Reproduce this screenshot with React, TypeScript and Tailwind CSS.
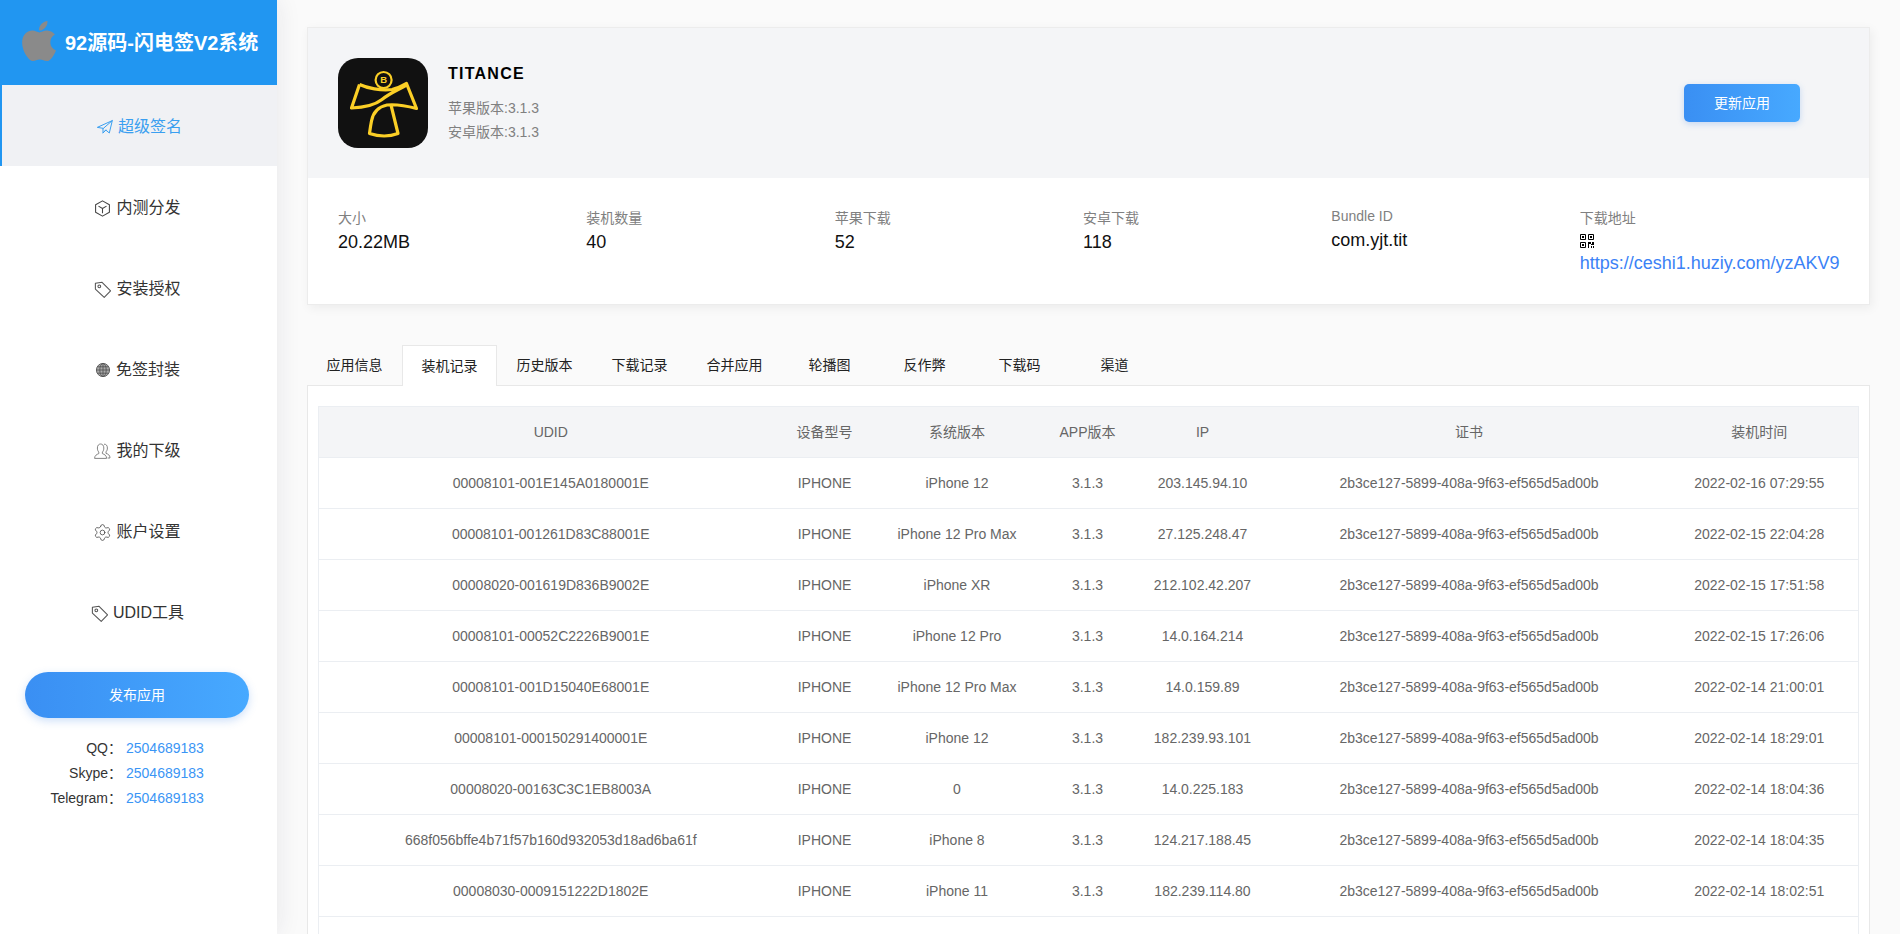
import { FaApple } from "react-icons/fa";
import { Settings } from "lucide-react";

const plane = (
  <svg width="16" height="16" viewBox="0 0 16 16" fill="none" stroke="currentColor" strokeWidth="1" strokeLinejoin="round" strokeLinecap="round">
    <path d="M.7 8.2 15.3 1.6 12.3 14 8.8 11 6 14V9.7Z" />
    <path d="M6 9.7 15.3 1.6M6 14l2.8-3" />
  </svg>
);
const cube = (
  <svg width="17" height="17" viewBox="0 0 16 16" fill="none" stroke="#444" strokeWidth="1" strokeLinejoin="round">
    <path d="M8 .8 14.5 4.4V11.6L8 15.2 1.5 11.6V4.4Z" />
    <path d="M4.2 5.8 8 8l3.8-2.2M8 8v4.5" />
  </svg>
);
const tag = (
  <svg width="17" height="17" viewBox="0 0 16 16" fill="none" stroke="#555" strokeWidth="1" strokeLinejoin="round">
    <path d="M1.3 2.2 7.6 1.2 15.6 9.4 9.6 15.4 1.3 7.6Z" />
    <circle cx="5" cy="5" r="1.3" />
  </svg>
);
const globe = (
  <svg width="16" height="16" viewBox="0 0 16 16" fill="none" stroke="#555" strokeWidth=".9">
    <circle cx="8" cy="8" r="6.6" fill="#aaa" />
    <ellipse cx="8" cy="8" rx="3.2" ry="6.6" />
    <path d="M8 1.4V14.6M1.4 8H14.6M2.4 4.8H13.6M2.4 11.2H13.6" />
  </svg>
);
const user = (
  <svg width="17" height="16" viewBox="0 0 17 16" fill="none" stroke="#777" strokeWidth=".9" strokeLinejoin="round">
    <path d="M.6 15.4C.6 12.4 2.8 11.4 4.8 10.6V9C3.7 8 3.4 6.6 3.4 5 3.4 2.4 4.8 1 6.6 1S9.8 2.4 9.8 5C9.8 6.6 9.5 8 8.4 9V10.6C10.4 11.4 12.6 12.4 12.6 15.4Z" />
    <path d="M10 1.2C12 1 13.4 2.4 13.4 5 13.4 6.6 13 7.8 12 8.8V10.4C14 11 16 12 16 15H13.6" />
  </svg>
);

const nav: [any, string][] = [
  [cube, "内测分发"],
  [tag, "安装授权"],
  [globe, "免签封装"],
  [user, "我的下级"],
  [<Settings size={19} strokeWidth={1} color="#444" className="-mx-[1px]" />, "账户设置"],
  [tag, "UDID工具"],
];

const contacts = ["QQ：", "Skype：", "Telegram："];

const cert = "2b3ce127-5899-408a-9f63-ef565d5ad00b";
const rows = [
  ["00008101-001E145A0180001E", "iPhone 12", "203.145.94.10", "2022-02-16 07:29:55"],
  ["00008101-001261D83C88001E", "iPhone 12 Pro Max", "27.125.248.47", "2022-02-15 22:04:28"],
  ["00008020-001619D836B9002E", "iPhone XR", "212.102.42.207", "2022-02-15 17:51:58"],
  ["00008101-00052C2226B9001E", "iPhone 12 Pro", "14.0.164.214", "2022-02-15 17:26:06"],
  ["00008101-001D15040E68001E", "iPhone 12 Pro Max", "14.0.159.89", "2022-02-14 21:00:01"],
  ["00008101-000150291400001E", "iPhone 12", "182.239.93.101", "2022-02-14 18:29:01"],
  ["00008020-00163C3C1EB8003A", "0", "14.0.225.183", "2022-02-14 18:04:36"],
  ["668f056bffe4b71f57b160d932053d18ad6ba61f", "iPhone 8", "124.217.188.45", "2022-02-14 18:04:35"],
  ["00008030-0009151222D1802E", "iPhone 11", "182.239.114.80", "2022-02-14 18:02:51"],
];

const tabs = ["应用信息", "装机记录", "历史版本", "下载记录", "合并应用", "轮播图", "反作弊", "下载码", "渠道"];

const stats = [
  ["大小", "20.22MB"],
  ["装机数量", "40"],
  ["苹果下载", "52"],
  ["安卓下载", "118"],
];

function AppIcon() {
  return (
    <svg width="90" height="90" viewBox="3 3 90 90" className="shrink-0">
      <rect x="3" y="3" width="90" height="90" rx="20" fill="#111" />
      <g fill="none" stroke="#fbcf26" strokeWidth="3.2" strokeLinejoin="round">
        <path d="M24.5 29.5C32 33 46 36 57 34.5 62 33.6 67 31 71.5 28.5L81.5 53.5C72 51 62 49 52 50 42 52 38 58 36.5 66 35.5 71 35 75 34.5 78.5 45 82 55 81.5 63 78.5L56 50" />
        <path d="M24.5 29.5 16.5 53C30 52.5 40 50 47 44.5 55 38 63 35 71.5 30" />
        <circle cx="48.6" cy="25" r="8" strokeWidth="2.2" />
      </g>
      <text x="48.6" y="28.4" textAnchor="middle" fontSize="9.5" fontWeight="700" fill="#fbcf26" fontFamily="Liberation Sans">B</text>
    </svg>
  );
}

function QrIcon() {
  return (
    <svg width="14" height="14" viewBox="0 0 14 14" className="block">
      <path fill="none" stroke="#000" d="M.5.5h5v5h-5zM8.5.5h5v5h-5zM.5 8.5h5v5h-5z" />
      <path d="M2 2h2v2H2zM10 2h2v2h-2zM2 10h2v2H2zM8 8h3v2H9v4H8zM12 8h2v3h-3v-1h1zM11 12h1v2h-1zM13 12h1v2h-1z" />
    </svg>
  );
}

export default function App() {
  return (
    <div className="flex h-[934px] overflow-hidden bg-[#fafafa] text-[14px] font-['Liberation_Sans','Noto_Sans_CJK_SC',sans-serif]">
      <aside className="relative z-10 w-[277px] shrink-0 bg-white shadow-[0_0_24px_rgba(30,30,70,0.09)]">
        <div className="flex h-[85px] items-center bg-[#2196f1] pl-[21px] pt-[1px]">
          <FaApple className="-mt-[5px] h-[46px] w-[36px] shrink-0 text-[#8a8a8a]" />
          <span className="ml-[8px] whitespace-nowrap text-[20px] font-bold text-white">92源码-闪电签V2系统</span>
        </div>
        <nav className="text-[16px] text-[#333]">
          <div className="flex h-[81px] items-center justify-center gap-[5px] border-l-2 border-[#2196f1] bg-[#f0f1f4] pt-[3px] text-[#3a9ff0]">
            {plane}
            <span>超级签名</span>
          </div>
          {nav.map(([icon, label]) => (
            <div key={label} className="flex h-[81px] items-center justify-center gap-[5px] pr-[2px] pt-[3px]">
              {icon}
              <span>{label}</span>
            </div>
          ))}
        </nav>
        <button className="mx-[25px] mt-[20px] flex h-[46px] w-[224px] items-center justify-center rounded-full bg-linear-to-r from-[#3a8ff3] to-[#47a9ff] text-white shadow-[0_3px_8px_rgba(60,130,230,0.25)]">
          发布应用
        </button>
        <div className="mt-[18px]">
          {contacts.map((c) => (
            <div key={c} className="flex h-[25px] items-center leading-[25px]">
              <span className="w-[122px] text-right text-[#333]">{c}</span>
              <span className="ml-[4px] text-[#3a95f5]">2504689183</span>
            </div>
          ))}
        </div>
      </aside>

      <main className="min-w-0 flex-1 px-[30px] pt-[27px]">
        <section className="h-[278px] border border-[#ececec] bg-white shadow-[2px_3px_10px_rgba(0,0,0,0.06)]">
          <div className="flex h-[150px] items-center bg-[#f4f5f7] pl-[30px]">
            <AppIcon />
            <div className="ml-[20px] flex-1">
              <div className="text-[16px] leading-[24px] font-bold tracking-[1.25px] text-black">TITANCE</div>
              <div className="mt-[10px] leading-[24px] text-[#808080]">苹果版本:3.1.3</div>
              <div className="leading-[24px] text-[#808080]">安卓版本:3.1.3</div>
            </div>
            <button className="mr-[69px] h-[38px] w-[116px] rounded-[5px] bg-linear-to-r from-[#3a8ff3] to-[#47a9ff] text-white shadow-[0_2px_6px_rgba(60,130,230,0.25)]">
              更新应用
            </button>
          </div>
          <div className="grid grid-cols-6 pr-[41px] pl-[30px]">
            {stats.map(([l, v]) => (
              <div key={l} className="pt-[30px]">
                <div className="h-[20px] leading-[20px] text-[#808080]">{l}</div>
                <div className="mt-[2px] h-[24px] text-[18px] leading-[24px] text-[#111]">{v}</div>
              </div>
            ))}
            <div className="pt-[28px]">
              <div className="h-[20px] leading-[20px] text-[#808080]">Bundle ID</div>
              <div className="mt-[2px] h-[24px] text-[18px] leading-[24px] text-[#111]">com.yjt.tit</div>
            </div>
            <div className="pt-[30px]">
              <div className="h-[20px] leading-[20px] text-[#808080]">下载地址</div>
              <div className="mt-[6px]">
                <QrIcon />
              </div>
              <div className="mt-[3px] h-[24px] text-[18px] leading-[24px] whitespace-nowrap text-[#3b82f6]">https://ceshi1.huziy.com/yzAKV9</div>
            </div>
          </div>
        </section>

        <div className="relative z-10 mt-[40px] -mb-px flex h-[41px]">
          {tabs.map((t, i) => (
            <div
              key={t}
              className={
                i === 1
                  ? "flex h-[41px] w-[95px] items-center justify-center border border-b-0 border-[#e8e8e8] bg-white text-[#222]"
                  : "flex h-[41px] w-[95px] items-center justify-center text-[#222]"
              }
            >
              {t}
            </div>
          ))}
        </div>

        <div className="border border-[#e8e8e8] bg-white px-[10px] pt-[20px]">
          <table className="w-full table-fixed border-collapse border border-[#ebeef2] text-center text-[#666]">
            <colgroup>
              <col className="w-[464px]" />
              <col className="w-[84px]" />
              <col className="w-[181px]" />
              <col className="w-[80px]" />
              <col className="w-[150px]" />
              <col className="w-[383px]" />
              <col />
            </colgroup>
            <thead>
              <tr className="h-[51px] bg-[#f4f5f7]">
                {["UDID", "设备型号", "系统版本", "APP版本", "IP", "证书", "装机时间"].map((h) => (
                  <th key={h} className="border-b border-[#ebeef2] font-normal">{h}</th>
                ))}
              </tr>
            </thead>
            <tbody>
              {rows.map((r) => (
                <tr key={r[0]} className="h-[51px]">
                  <td className="border-b border-[#ebeef2]">{r[0]}</td>
                  <td className="border-b border-[#ebeef2]">IPHONE</td>
                  <td className="border-b border-[#ebeef2]">{r[1]}</td>
                  <td className="border-b border-[#ebeef2]">3.1.3</td>
                  <td className="border-b border-[#ebeef2]">{r[2]}</td>
                  <td className="border-b border-[#ebeef2]">{cert}</td>
                  <td className="border-b border-[#ebeef2]">{r[3]}</td>
                </tr>
              ))}
              <tr className="h-[51px]">
                <td colSpan={7} />
              </tr>
            </tbody>
          </table>
        </div>
      </main>
    </div>
  );
}
